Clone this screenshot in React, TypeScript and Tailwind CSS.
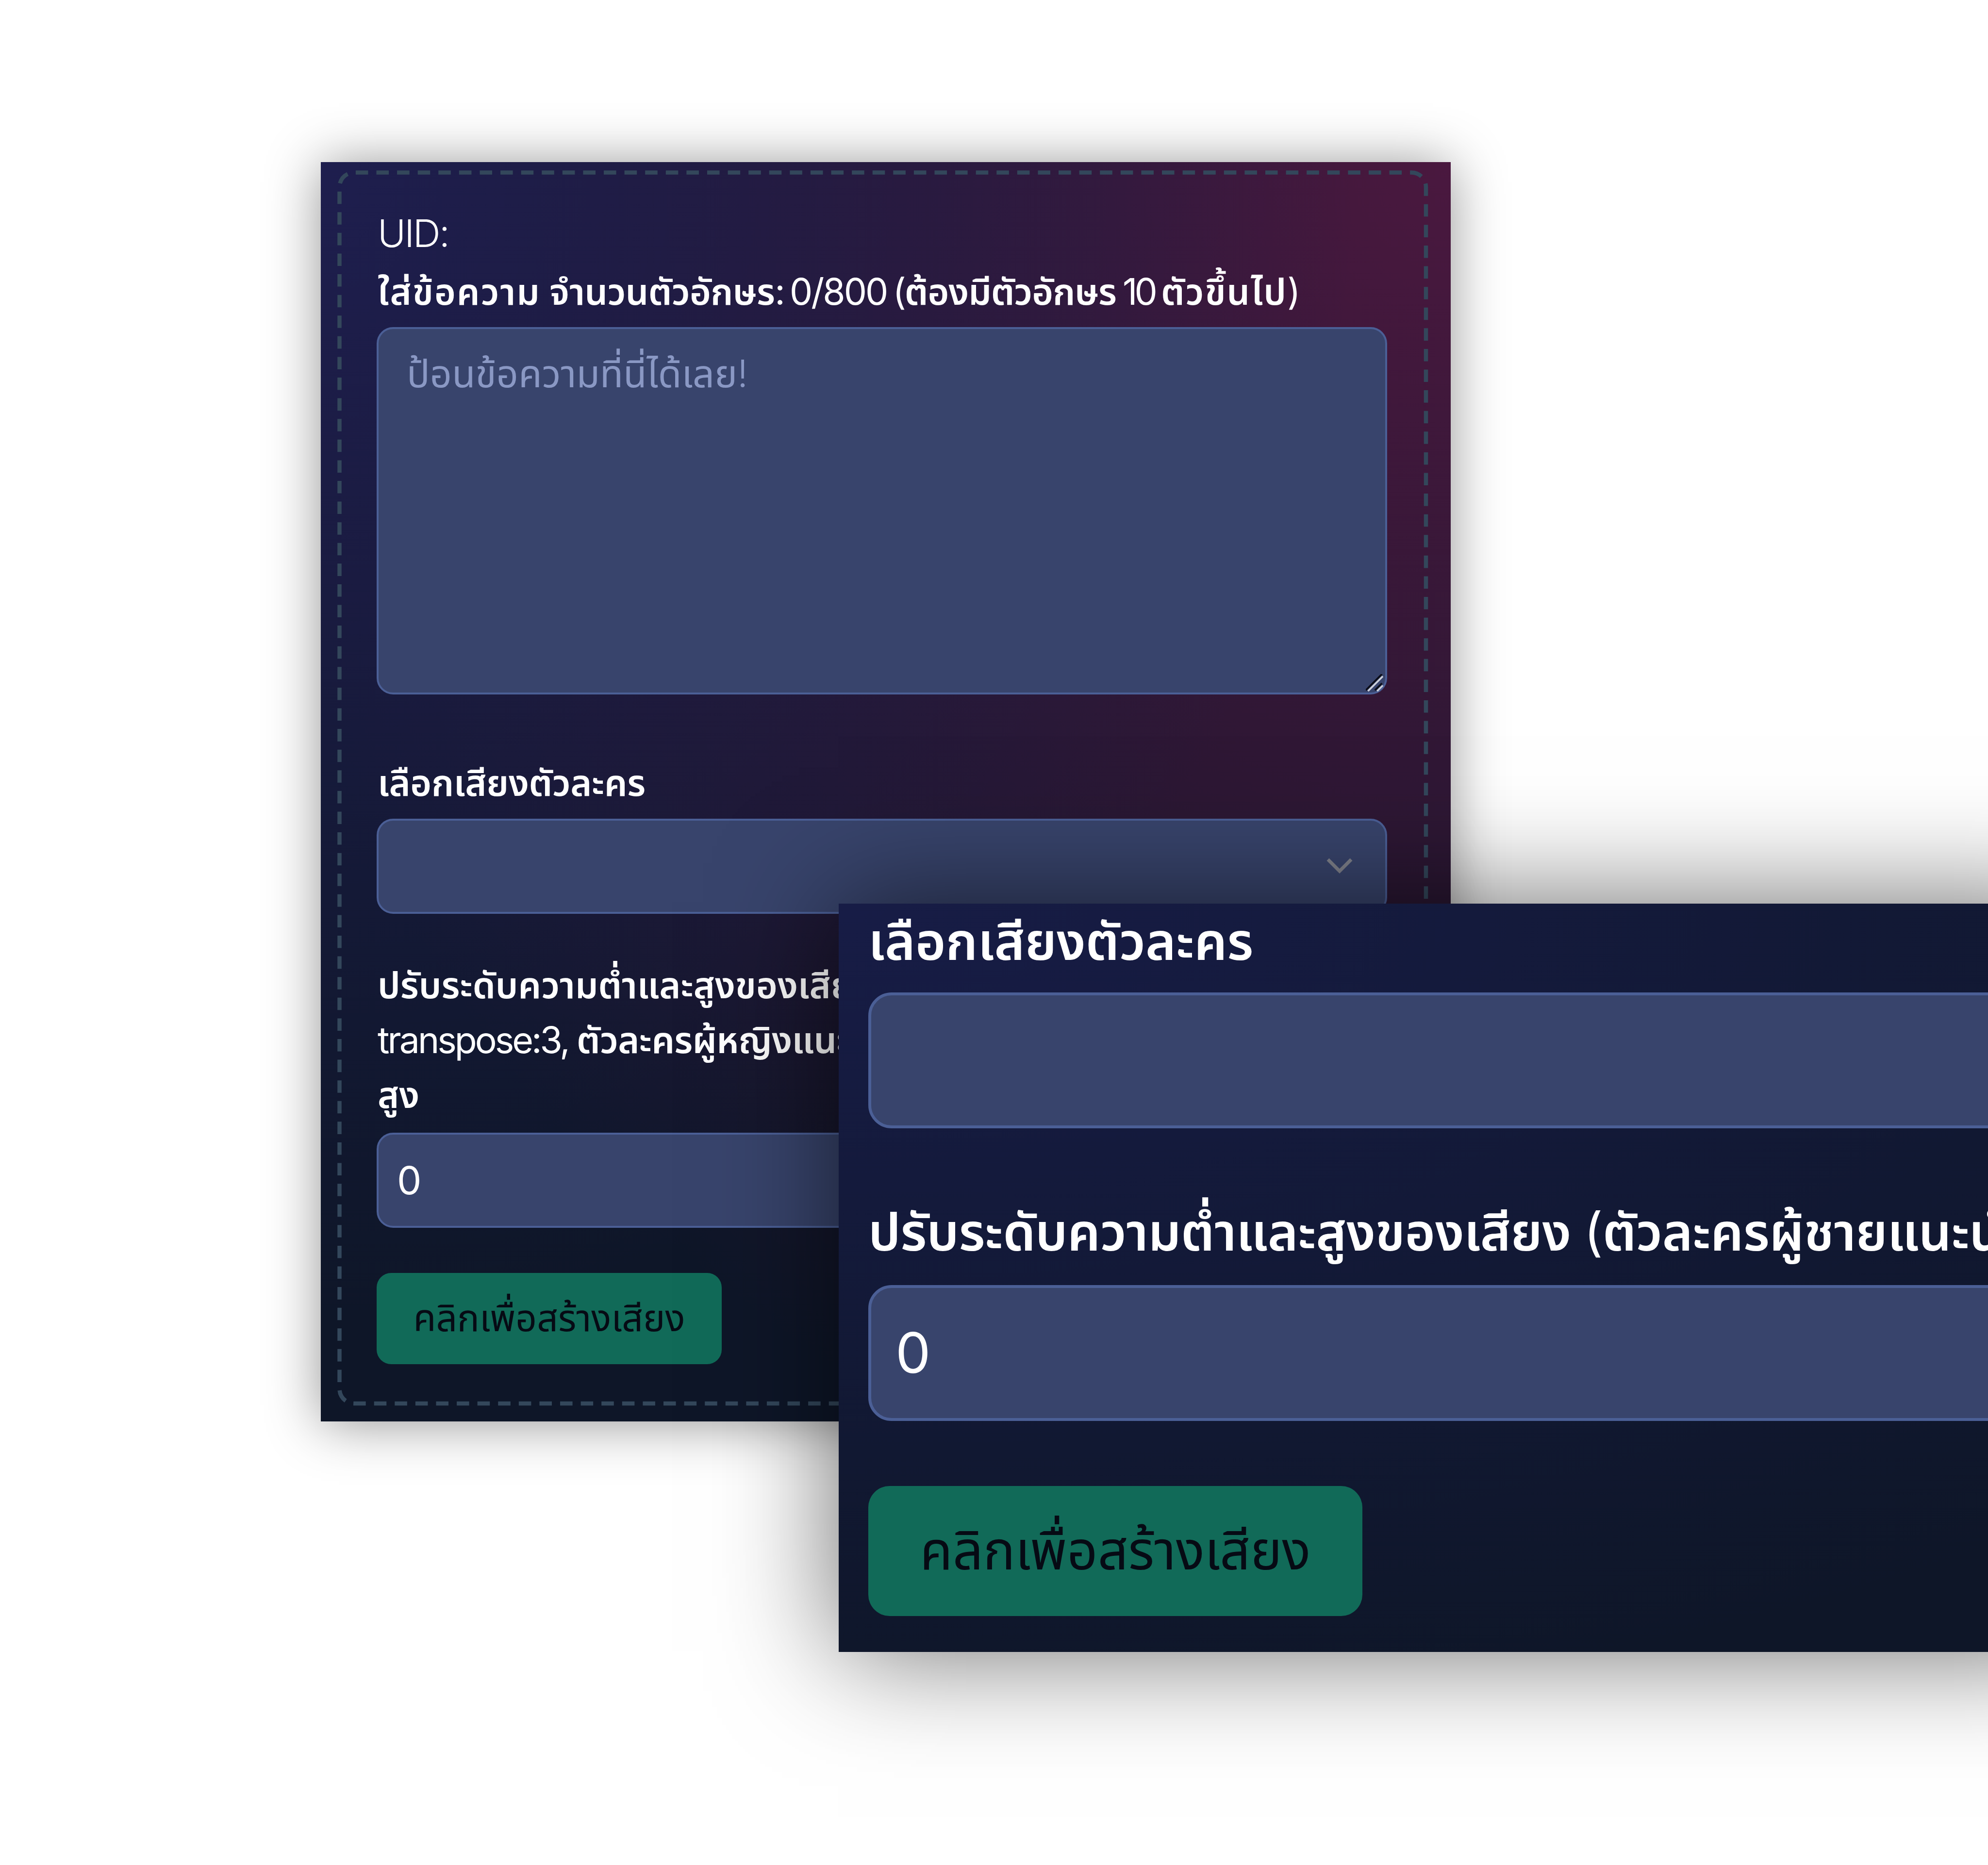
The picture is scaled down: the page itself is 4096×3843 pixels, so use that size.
const fieldClass = 'w-full border-[#4b5f96] bg-[#38446c] text-white'

function DashedFrame() {
  return (
    <svg className="pointer-events-none absolute inset-0 h-full w-full" viewBox="0 0 2328 2595" fill="none">
      <rect
        x="38.5"
        y="21.5"
        width="2238.5"
        height="2536.5"
        rx="30"
        stroke="#33475b"
        strokeWidth="8.5"
        pathLength="1115"
        strokeDasharray="3 2"
        strokeDashoffset="-0.4"
      />
    </svg>
  )
}

function VoiceForm() {
  return (
    <section className="absolute left-[661px] top-[334px] h-[2595px] w-[2328px] bg-[#0e1628] bg-[radial-gradient(ellipse_at_0%_0%,#1e1e4e_0%,transparent_65%),radial-gradient(ellipse_at_100%_0%,#4a183f_0%,transparent_78%)] shadow-[0_4px_104px_rgba(0,0,0,0.42)]">
      <DashedFrame />
      <div className="flex flex-col pl-[117px] pr-[129px] pt-[90px]">
        <p className="h-[108px] text-[79px] leading-[113px] font-light tracking-[-3px] text-white">UID:</p>
        <label className="h-[142px] whitespace-nowrap text-[75px] leading-[137px] font-semibold tracking-[-0.6px] text-white">
          <span className="tracking-[2px]">ใส่ข้อความ</span> จำนวนตัวอักษร
          <span className="font-normal tracking-[-3px] [word-spacing:-6px]">: 0/800 (</span>
          <span className="tracking-[-1px]">ต้องมีตัวอักษร</span>
          <span className="font-normal tracking-[-6px] [word-spacing:-2px]"> 10 </span>
          <span className="tracking-[2px]">ตัวขึ้นไป</span>
          <span className="font-normal">)</span>
        </label>
        <div className={`${fieldClass} relative -ml-0.5 h-[757px] rounded-[34px] border-4 px-[58px] py-[35px] text-[79px] leading-[113px]`}>
          <span className="text-[#8a98c4]">
            ป้อนข้อความที่นี่ได้เลย<span className="font-light">!</span>
          </span>
          <svg className="absolute bottom-0.5 right-1 h-[36px] w-[36px]" viewBox="0 0 40 40" fill="none">
            <path d="M0 37L37 0M21 37L37 21" stroke="#0b0d18" strokeWidth="4" />
            <path d="M5 39L39 5M26 39L39 26" stroke="#cdd0da" strokeWidth="4" />
          </svg>
        </div>

        <label className="mt-[114px] h-[142px] text-[75px] leading-[136px] font-semibold tracking-[-0.3px] text-white">
          เลือกเสียงตัวละคร
        </label>
        <div className={`${fieldClass} -ml-0.5 flex h-[196px] items-center justify-end rounded-[34px] border-4 pr-[64px]`}>
          <svg className="h-[60px] w-[60px]" viewBox="0 0 60 60" fill="none">
            <path d="M6 16L30 40L54 16" stroke="#80828c" strokeWidth="7" />
          </svg>
        </div>

        <label className="mt-[90px] h-[361px] whitespace-nowrap text-[75px] leading-[113px] font-semibold text-white">
          ปรับระดับความต่ำและสูงของเสียง
          <br />
          <span className="font-normal tracking-[-4px]">transpose:3, </span>
          <span className="tracking-[-0.6px]">ตัวละครผู้หญิงแนะนำ</span>
          <br />
          สูง
        </label>
        <div className={`${fieldClass} -ml-0.5 flex h-[196px] items-center rounded-[34px] border-4 px-[38px] text-[80px]`}>0</div>

        <button className="-ml-0.5 mt-[93px] h-[188px] w-[711px] rounded-[30px] bg-[#116a58] pb-1 text-[76.5px] text-[#060a14]">
          คลิกเพื่อสร้างเสียง
        </button>
      </div>
    </section>
  )
}

function VoiceFormZoomed() {
  return (
    <section className="absolute left-[1728px] top-[1862px] h-[1542px] w-[2560px] bg-[#0e1628] bg-[radial-gradient(150%_110%_at_0%_0%,#171c46_0%,transparent_100%)] shadow-[0_-2px_230px_rgba(0,0,0,0.58)]">
      <div className="flex flex-col pl-[61px]">
        <label className="h-[183px] whitespace-nowrap text-[107px] leading-[155px] font-semibold text-white">เลือกเสียงตัวละคร</label>
        <div className={`${fieldClass} h-[280px] rounded-[48px] border-6`} />
        <label className="mt-[140px] h-[183px] whitespace-nowrap text-[107px] leading-[147px] font-semibold tracking-[-0.4px] text-white">
          ปรับระดับความต่ำและสูงของเสียง <span className="font-normal">(</span>
          ตัวละครผู้ชายแนะนำ
        </label>
        <div className={`${fieldClass} flex h-[280px] items-center rounded-[48px] border-6 px-[50px] text-[115px]`}>0</div>
        <button className="mt-[134px] h-[268px] w-[1018px] rounded-[44px] bg-[#116a58] pb-1 text-[110px] text-[#060a14]">
          คลิกเพื่อสร้างเสียง
        </button>
      </div>
    </section>
  )
}

export default function App() {
  return (
    <main className="relative h-[3843px] w-[4096px] overflow-hidden bg-white font-['Inter','Noto_Sans_Thai',sans-serif]">
      <VoiceForm />
      <VoiceFormZoomed />
    </main>
  )
}
